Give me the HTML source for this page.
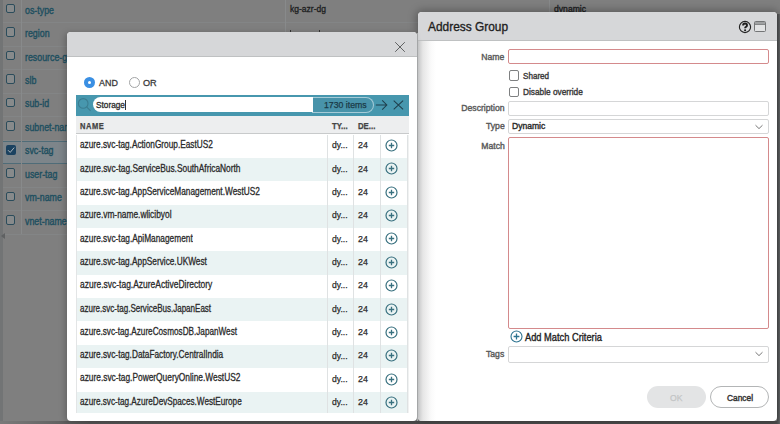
<!DOCTYPE html>
<html><head><meta charset="utf-8"><style>
html,body{margin:0;padding:0}
body{width:780px;height:424px;overflow:hidden;position:relative;background:#7f7f7f;font-family:"Liberation Sans", sans-serif}
.abs{position:absolute;box-sizing:content-box}
.t{position:absolute;white-space:nowrap;line-height:1;transform-origin:0 0;-webkit-text-stroke:0.25px currentColor}
.sq{display:inline-block;transform:scaleX(0.95);transform-origin:100% 0;-webkit-text-stroke:0.4px currentColor}
</style></head><body>
<div class="abs" style="left:3px;top:22.45px;width:777px;height:1px;background:#838586"></div><div class="abs" style="left:5.8px;top:3.90px;width:7.6px;height:7.6px;border:1.6px solid #2b4c5b;border-radius:2px;background:#878a8b"></div><div class="t " style="left:25.40px;top:5.60px;font-size:10.4px;color:#1e4f5f;font-weight:400;transform:scaleX(0.85);-webkit-text-stroke:0.4px currentColor;">os-type</div><div class="abs" style="left:3px;top:45.90px;width:777px;height:1px;background:#838586"></div><div class="abs" style="left:5.8px;top:27.35px;width:7.6px;height:7.6px;border:1.6px solid #2b4c5b;border-radius:2px;background:#878a8b"></div><div class="t " style="left:25.40px;top:29.05px;font-size:10.4px;color:#1e4f5f;font-weight:400;transform:scaleX(0.85);-webkit-text-stroke:0.4px currentColor;">region</div><div class="abs" style="left:3px;top:69.35px;width:777px;height:1px;background:#838586"></div><div class="abs" style="left:5.8px;top:50.80px;width:7.6px;height:7.6px;border:1.6px solid #2b4c5b;border-radius:2px;background:#878a8b"></div><div class="t " style="left:25.40px;top:52.50px;font-size:10.4px;color:#1e4f5f;font-weight:400;transform:scaleX(0.85);-webkit-text-stroke:0.4px currentColor;">resource-group</div><div class="abs" style="left:3px;top:92.80px;width:777px;height:1px;background:#838586"></div><div class="abs" style="left:5.8px;top:74.25px;width:7.6px;height:7.6px;border:1.6px solid #2b4c5b;border-radius:2px;background:#878a8b"></div><div class="t " style="left:25.40px;top:75.95px;font-size:10.4px;color:#1e4f5f;font-weight:400;transform:scaleX(0.85);-webkit-text-stroke:0.4px currentColor;">slb</div><div class="abs" style="left:3px;top:116.25px;width:777px;height:1px;background:#838586"></div><div class="abs" style="left:5.8px;top:97.70px;width:7.6px;height:7.6px;border:1.6px solid #2b4c5b;border-radius:2px;background:#878a8b"></div><div class="t " style="left:25.40px;top:99.40px;font-size:10.4px;color:#1e4f5f;font-weight:400;transform:scaleX(0.85);-webkit-text-stroke:0.4px currentColor;">sub-id</div><div class="abs" style="left:3px;top:139.70px;width:777px;height:1px;background:#838586"></div><div class="abs" style="left:5.8px;top:121.15px;width:7.6px;height:7.6px;border:1.6px solid #2b4c5b;border-radius:2px;background:#878a8b"></div><div class="t " style="left:25.40px;top:122.85px;font-size:10.4px;color:#1e4f5f;font-weight:400;transform:scaleX(0.85);-webkit-text-stroke:0.4px currentColor;">subnet-name</div><div class="abs" style="left:3px;top:163.15px;width:777px;height:1px;background:#838586"></div><div class="abs" style="left:1px;top:141.00px;width:779px;height:21.25px;background:#7d858a;border-top:1px solid #4f6c78;border-bottom:1px solid #4f6c78"></div><div class="abs" style="left:6px;top:144.70px;width:10px;height:10px;background:#1b4260;border-radius:2px"></div><svg class="abs" style="left:6px;top:144.70px" width="10" height="10" viewBox="0 0 10 10"><path d="M2 5.2 L4.2 7.4 L8.2 2.6" stroke="#a9b3b9" stroke-width="1" fill="none"/></svg><div class="t " style="left:25.40px;top:146.30px;font-size:10.4px;color:#1e4f5f;font-weight:400;transform:scaleX(0.85);-webkit-text-stroke:0.4px currentColor;">svc-tag</div><div class="abs" style="left:3px;top:186.60px;width:777px;height:1px;background:#838586"></div><div class="abs" style="left:5.8px;top:168.05px;width:7.6px;height:7.6px;border:1.6px solid #2b4c5b;border-radius:2px;background:#878a8b"></div><div class="t " style="left:25.40px;top:169.75px;font-size:10.4px;color:#1e4f5f;font-weight:400;transform:scaleX(0.85);-webkit-text-stroke:0.4px currentColor;">user-tag</div><div class="abs" style="left:3px;top:210.05px;width:777px;height:1px;background:#838586"></div><div class="abs" style="left:5.8px;top:191.50px;width:7.6px;height:7.6px;border:1.6px solid #2b4c5b;border-radius:2px;background:#878a8b"></div><div class="t " style="left:25.40px;top:193.20px;font-size:10.4px;color:#1e4f5f;font-weight:400;transform:scaleX(0.85);-webkit-text-stroke:0.4px currentColor;">vm-name</div><div class="abs" style="left:3px;top:233.50px;width:777px;height:1px;background:#838586"></div><div class="abs" style="left:5.8px;top:214.95px;width:7.6px;height:7.6px;border:1.6px solid #2b4c5b;border-radius:2px;background:#878a8b"></div><div class="t " style="left:25.40px;top:216.65px;font-size:10.4px;color:#1e4f5f;font-weight:400;transform:scaleX(0.85);-webkit-text-stroke:0.4px currentColor;">vnet-name</div><div class="abs" style="left:21px;top:0;width:1px;height:234px;background:#888a8b"></div><div class="abs" style="left:285px;top:0;width:1px;height:40px;background:#888a8b"></div><div class="abs" style="left:549px;top:0;width:1px;height:14px;background:#888a8b"></div><div class="t " style="left:289.80px;top:5.07px;font-size:8.9px;color:#1c1d1e;font-weight:400;transform:scaleX(0.96);-webkit-text-stroke:0.3px currentColor;">kg-azr-dg</div><div class="abs" style="left:290px;top:30px;width:1.4px;height:2px;background:#333"></div><div class="abs" style="left:319px;top:30px;width:1.4px;height:2px;background:#333"></div><div class="t " style="left:553.50px;top:5.07px;font-size:8.9px;color:#1c1d1e;font-weight:400;transform:scaleX(0.97);-webkit-text-stroke:0.3px currentColor;">dynamic</div><div class="abs" style="left:0;top:0;width:3px;height:424px;background:#727475"></div><div class="abs" style="left:1px;top:233px;width:0;height:0;border-top:3px solid transparent;border-bottom:3px solid transparent;border-right:4px solid #5f6162"></div><div class="abs" style="left:0;top:420.8px;width:780px;height:3.2px;background:linear-gradient(to right,#7a7a7a 0px,#666 50px,#535353 90px,#4e4e4e 400px)"></div><div class="abs" style="left:777px;top:14px;width:3px;height:410px;background:linear-gradient(to right,#4e5051,#5c5e5f 2px,#6a6c6d)"></div><div class="abs" style="left:418px;top:12px;width:359px;height:408.5px;background:#fff;border-radius:4px;overflow:hidden;box-shadow:0 0 9px 2px rgba(0,0,0,.28)"><div class="abs" style="left:0;top:0;width:359px;height:27.6px;background:#d6d7d9;border-bottom:1.5px solid #bfc1c2"></div><div class="abs" style="left:0;top:29px;width:18px;height:380px;background:linear-gradient(to right,#c9cacb,#e6e6e6 5px,#fafafa 13px,#fff 18px)"></div></div><div class="t " style="left:427.70px;top:19.60px;font-size:13px;color:#1e1e1e;font-weight:400;transform:scaleX(0.915);-webkit-text-stroke:0.35px currentColor;">Address Group</div><svg class="abs" style="left:738px;top:20px" width="14" height="14" viewBox="0 0 14 14"><circle cx="7" cy="7" r="5.6" stroke="#222" stroke-width="1.15" fill="none"/><path d="M5.1 5.4 Q5.1 3.5 7.1 3.5 Q9 3.5 9 5.2 Q9 6.2 7.9 6.8 Q7.1 7.2 7.1 8.3" stroke="#1e1e1e" stroke-width="1.9" fill="none"/><circle cx="7.1" cy="10.3" r="1.05" fill="#1e1e1e"/></svg><div class="abs" style="left:754px;top:21.3px;width:9.8px;height:8.4px;border:1px solid #737576;border-radius:1.5px;background:#e2e3e4"></div><div class="abs" style="left:755px;top:22.3px;width:9.8px;height:2.2px;background:#a0a2a3;border-bottom:0.8px solid #858788"></div><div class="abs" style="left:304.00px;top:52.90px;width:200px;text-align:right;font-size:9.1px;line-height:9.1px;color:#5a5a5a"><span class="sq">Name</span></div><div class="abs" style="left:508px;top:49.2px;width:259px;height:13.3px;border:1px solid #d48a8c;border-radius:2px;background:#fff"></div><div class="abs" style="left:509px;top:70.3px;width:8.3px;height:8.3px;border:1.2px solid #7e8081;border-radius:2px"></div><div class="t " style="left:522.50px;top:71.80px;font-size:9.1px;color:#3a3a3a;font-weight:400;transform:scaleX(0.89);-webkit-text-stroke:0.4px currentColor;">Shared</div><div class="abs" style="left:509px;top:86.7px;width:8.3px;height:8.3px;border:1.2px solid #7e8081;border-radius:2px"></div><div class="t " style="left:522.50px;top:87.80px;font-size:9.1px;color:#3a3a3a;font-weight:400;transform:scaleX(0.91);-webkit-text-stroke:0.4px currentColor;">Disable override</div><div class="abs" style="left:304.30px;top:104.10px;width:200px;text-align:right;font-size:9.1px;line-height:9.1px;color:#5a5a5a"><span class="sq">Description</span></div><div class="abs" style="left:508px;top:101px;width:259px;height:13px;border:1px solid #d5d6d7;border-radius:2px"></div><div class="abs" style="left:304.30px;top:122.40px;width:200px;text-align:right;font-size:9.1px;line-height:9.1px;color:#5a5a5a"><span class="sq">Type</span></div><div class="abs" style="left:508px;top:119.2px;width:259px;height:12.6px;border:1px solid #d5d6d7;border-radius:2px"></div><div class="t " style="left:511.60px;top:122.40px;font-size:9.1px;color:#2a2a2a;font-weight:400;transform:scaleX(0.94);-webkit-text-stroke:0.4px currentColor;">Dynamic</div><svg class="abs" style="left:754px;top:124px" width="10" height="6" viewBox="0 0 10 6"><path d="M1.5 1.2 L5 4.6 L8.5 1.2" stroke="#777" stroke-width="1" fill="none"/></svg><div class="abs" style="left:304.30px;top:141.50px;width:200px;text-align:right;font-size:9.1px;line-height:9.1px;color:#5a5a5a"><span class="sq">Match</span></div><div class="abs" style="left:508px;top:137px;width:259px;height:190px;border:1px solid #d48a8c;border-radius:2px"></div><svg class="abs" style="left:509.5px;top:330px" width="13" height="13" viewBox="0 0 13 13"><circle cx="6.5" cy="6.5" r="5.5" stroke="#2d7390" stroke-width="1.1" fill="none"/><path d="M6.5 3.6 V9.4 M3.6 6.5 H9.4" stroke="#2d7390" stroke-width="1.3"/></svg><div class="t " style="left:524.60px;top:332.31px;font-size:10.5px;color:#222;font-weight:400;transform:scaleX(0.885);-webkit-text-stroke:0.35px currentColor;">Add Match Criteria</div><div class="abs" style="left:304.30px;top:350.30px;width:200px;text-align:right;font-size:9.1px;line-height:9.1px;color:#5a5a5a"><span class="sq">Tags</span></div><div class="abs" style="left:508px;top:346.3px;width:259px;height:14.5px;border:1px solid #d5d6d7;border-radius:2px"></div><svg class="abs" style="left:754px;top:351px" width="10" height="6" viewBox="0 0 10 6"><path d="M1.5 1.2 L5 4.6 L8.5 1.2" stroke="#777" stroke-width="1" fill="none"/></svg><div class="abs" style="left:647px;top:386.3px;width:58.5px;height:21.6px;border-radius:11px;background:#e3e4e5"></div><div class="t " style="left:670.40px;top:392.87px;font-size:9.6px;color:#c3c5c6;font-weight:400;transform:scaleX(0.9);">OK</div><div class="abs" style="left:710.4px;top:386.3px;width:56.6px;height:19.6px;border-radius:11px;border:1px solid #b3b5b6;background:#fff"></div><div class="t " style="left:727.20px;top:392.87px;font-size:9.6px;color:#333;font-weight:400;transform:scaleX(0.87);-webkit-text-stroke:0.45px currentColor;">Cancel</div><div class="abs" style="left:67px;top:32px;width:350px;height:388.6px;background:#fff;border-radius:4px;overflow:hidden;box-shadow:-2px 1px 6px rgba(0,0,0,.22)"><div class="abs" style="left:0;top:0;width:350px;height:24.2px;background:#d6d7d9;border-bottom:1.5px solid #bfc1c2"></div></div><svg class="abs" style="left:394px;top:41px" width="12" height="12" viewBox="0 0 12 12"><path d="M1.2 1.2 L10.8 10.8 M10.8 1.2 L1.2 10.8" stroke="#606263" stroke-width="1"/></svg><div class="abs" style="left:417px;top:32.5px;width:1px;height:388px;background:#a4a6a7"></div><div class="abs" style="left:84.3px;top:76.6px;width:11px;height:11px;border-radius:50%;background:#3a8fe3"></div><div class="abs" style="left:88.3px;top:80.6px;width:3px;height:3px;border-radius:50%;background:#fff"></div><div class="t " style="left:98.80px;top:78.07px;font-size:9.6px;color:#3a3a3a;font-weight:400;transform:scaleX(0.93);-webkit-text-stroke:0.3px currentColor;">AND</div><div class="abs" style="left:128.9px;top:76.8px;width:9.6px;height:9.6px;border-radius:50%;border:0.9px solid #a2a4a5;background:#fff"></div><div class="t " style="left:143.00px;top:78.07px;font-size:9.6px;color:#3a3a3a;font-weight:400;transform:scaleX(0.95);-webkit-text-stroke:0.3px currentColor;">OR</div><div class="abs" style="left:75.5px;top:95.4px;width:333.5px;height:20.2px;background:#4797ae"></div><svg class="abs" style="left:76px;top:96px" width="16" height="16" viewBox="0 0 16 16"><circle cx="7.2" cy="7.4" r="4.8" stroke="#3b7d91" stroke-width="1.1" fill="none"/><path d="M10.6 10.9 L14.6 14.9" stroke="#3b7d91" stroke-width="1.1"/></svg><div class="abs" style="left:312px;top:97px;width:60.5px;height:13.8px;border-radius:0 8px 8px 0;background:#4893aa;border:1px solid #a6cbd7;border-left:none"></div><div class="abs" style="left:92.5px;top:97px;width:220px;height:15px;border-radius:8px 0 0 8px;background:#fff"></div><div class="t " style="left:96.30px;top:101.31px;font-size:9.2px;color:#2a2a2a;font-weight:400;transform:scaleX(0.9);-webkit-text-stroke:0.3px currentColor;">Storage</div><div class="abs" style="left:125.3px;top:99.6px;width:1px;height:10px;background:#333"></div><div class="t " style="left:323.80px;top:100.14px;font-size:9.4px;color:#1a3a47;font-weight:400;transform:scaleX(0.93);">1730 items</div><svg class="abs" style="left:375px;top:99px" width="13" height="12" viewBox="0 0 13 12"><path d="M0.8 6 H12 M7.2 1.4 L11.8 6 L7.2 10.6" stroke="#1f3f4c" stroke-width="1.05" fill="none"/></svg><svg class="abs" style="left:392.5px;top:99.5px" width="11" height="10" viewBox="0 0 11 10"><path d="M0.7 0.7 L10.1 9.3 M10.1 0.7 L0.7 9.3" stroke="#1f3f4c" stroke-width="1.05"/></svg><div class="abs" style="left:75.5px;top:115.6px;width:333.5px;height:17.8px;background:#edeeef;border-bottom:1.6px solid #c8cacb"></div><div class="t " style="left:80.00px;top:122.96px;font-size:8.2px;color:#444;font-weight:700;transform:scaleX(0.92);letter-spacing:0.6px;">NAME</div><div class="t " style="left:332.00px;top:122.96px;font-size:8.2px;color:#444;font-weight:700;transform:scaleX(0.95);">TY...</div><div class="t " style="left:358.00px;top:122.96px;font-size:8.2px;color:#444;font-weight:700;transform:scaleX(0.95);">DE...</div><div class="abs" style="left:75.5px;top:134.5px;width:331.5px;height:278.3px;overflow:hidden"><div class="abs" style="left:0;top:0.00px;width:331.5px;height:23.37px;background:#fff"></div><div class="abs" style="left:0;top:23.37px;width:331.5px;height:23.37px;background:#eaf3f3"></div><div class="abs" style="left:0;top:46.74px;width:331.5px;height:23.37px;background:#fff"></div><div class="abs" style="left:0;top:70.11px;width:331.5px;height:23.37px;background:#eaf3f3"></div><div class="abs" style="left:0;top:93.48px;width:331.5px;height:23.37px;background:#fff"></div><div class="abs" style="left:0;top:116.85px;width:331.5px;height:23.37px;background:#eaf3f3"></div><div class="abs" style="left:0;top:140.22px;width:331.5px;height:23.37px;background:#fff"></div><div class="abs" style="left:0;top:163.59px;width:331.5px;height:23.37px;background:#eaf3f3"></div><div class="abs" style="left:0;top:186.96px;width:331.5px;height:23.37px;background:#fff"></div><div class="abs" style="left:0;top:210.33px;width:331.5px;height:23.37px;background:#eaf3f3"></div><div class="abs" style="left:0;top:233.70px;width:331.5px;height:23.37px;background:#fff"></div><div class="abs" style="left:0;top:257.07px;width:331.5px;height:23.37px;background:#eaf3f3"></div></div><div class="t " style="left:80.20px;top:140.48px;font-size:10.3px;color:#2a2a2a;font-weight:400;transform:scaleX(0.8029);-webkit-text-stroke:0.3px currentColor;">azure.svc-tag.ActionGroup.EastUS2</div><div class="t " style="left:331.80px;top:140.20px;font-size:9.8px;color:#2a2a2a;font-weight:400;transform:scaleX(0.88);">dy...</div><div class="t " style="left:358.20px;top:140.16px;font-size:9.5px;color:#2a2a2a;font-weight:400;transform:scaleX(0.93);">24</div><svg class="abs" style="left:385.1px;top:139.00px" width="13" height="13" viewBox="0 0 13 13"><circle cx="6.5" cy="6.5" r="5.5" stroke="#38707f" stroke-width="1.2" fill="none"/><path d="M6.5 3.8 V9.2 M3.8 6.5 H9.2" stroke="#38707f" stroke-width="1.3"/></svg><div class="t " style="left:80.20px;top:163.78px;font-size:10.3px;color:#2a2a2a;font-weight:400;transform:scaleX(0.8105);-webkit-text-stroke:0.3px currentColor;">azure.svc-tag.ServiceBus.SouthAfricaNorth</div><div class="t " style="left:331.80px;top:163.57px;font-size:9.8px;color:#2a2a2a;font-weight:400;transform:scaleX(0.88);">dy...</div><div class="t " style="left:358.20px;top:163.53px;font-size:9.5px;color:#2a2a2a;font-weight:400;transform:scaleX(0.93);">24</div><svg class="abs" style="left:385.1px;top:162.37px" width="13" height="13" viewBox="0 0 13 13"><circle cx="6.5" cy="6.5" r="5.5" stroke="#38707f" stroke-width="1.2" fill="none"/><path d="M6.5 3.8 V9.2 M3.8 6.5 H9.2" stroke="#38707f" stroke-width="1.3"/></svg><div class="t " style="left:80.20px;top:187.08px;font-size:10.3px;color:#2a2a2a;font-weight:400;transform:scaleX(0.8041);-webkit-text-stroke:0.3px currentColor;">azure.svc-tag.AppServiceManagement.WestUS2</div><div class="t " style="left:331.80px;top:186.94px;font-size:9.8px;color:#2a2a2a;font-weight:400;transform:scaleX(0.88);">dy...</div><div class="t " style="left:358.20px;top:186.90px;font-size:9.5px;color:#2a2a2a;font-weight:400;transform:scaleX(0.93);">24</div><svg class="abs" style="left:385.1px;top:185.74px" width="13" height="13" viewBox="0 0 13 13"><circle cx="6.5" cy="6.5" r="5.5" stroke="#38707f" stroke-width="1.2" fill="none"/><path d="M6.5 3.8 V9.2 M3.8 6.5 H9.2" stroke="#38707f" stroke-width="1.3"/></svg><div class="t " style="left:80.20px;top:210.38px;font-size:10.3px;color:#2a2a2a;font-weight:400;transform:scaleX(0.8116);-webkit-text-stroke:0.3px currentColor;">azure.vm-name.wlicibyol</div><div class="t " style="left:331.80px;top:210.31px;font-size:9.8px;color:#2a2a2a;font-weight:400;transform:scaleX(0.88);">dy...</div><div class="t " style="left:358.20px;top:210.27px;font-size:9.5px;color:#2a2a2a;font-weight:400;transform:scaleX(0.93);">24</div><svg class="abs" style="left:385.1px;top:209.11px" width="13" height="13" viewBox="0 0 13 13"><circle cx="6.5" cy="6.5" r="5.5" stroke="#38707f" stroke-width="1.2" fill="none"/><path d="M6.5 3.8 V9.2 M3.8 6.5 H9.2" stroke="#38707f" stroke-width="1.3"/></svg><div class="t " style="left:80.20px;top:233.68px;font-size:10.3px;color:#2a2a2a;font-weight:400;transform:scaleX(0.807);-webkit-text-stroke:0.3px currentColor;">azure.svc-tag.ApiManagement</div><div class="t " style="left:331.80px;top:233.68px;font-size:9.8px;color:#2a2a2a;font-weight:400;transform:scaleX(0.88);">dy...</div><div class="t " style="left:358.20px;top:233.64px;font-size:9.5px;color:#2a2a2a;font-weight:400;transform:scaleX(0.93);">24</div><svg class="abs" style="left:385.1px;top:232.48px" width="13" height="13" viewBox="0 0 13 13"><circle cx="6.5" cy="6.5" r="5.5" stroke="#38707f" stroke-width="1.2" fill="none"/><path d="M6.5 3.8 V9.2 M3.8 6.5 H9.2" stroke="#38707f" stroke-width="1.3"/></svg><div class="t " style="left:80.20px;top:256.98px;font-size:10.3px;color:#2a2a2a;font-weight:400;transform:scaleX(0.8044);-webkit-text-stroke:0.3px currentColor;">azure.svc-tag.AppService.UKWest</div><div class="t " style="left:331.80px;top:257.05px;font-size:9.8px;color:#2a2a2a;font-weight:400;transform:scaleX(0.88);">dy...</div><div class="t " style="left:358.20px;top:257.01px;font-size:9.5px;color:#2a2a2a;font-weight:400;transform:scaleX(0.93);">24</div><svg class="abs" style="left:385.1px;top:255.85px" width="13" height="13" viewBox="0 0 13 13"><circle cx="6.5" cy="6.5" r="5.5" stroke="#38707f" stroke-width="1.2" fill="none"/><path d="M6.5 3.8 V9.2 M3.8 6.5 H9.2" stroke="#38707f" stroke-width="1.3"/></svg><div class="t " style="left:80.20px;top:280.28px;font-size:10.3px;color:#2a2a2a;font-weight:400;transform:scaleX(0.8227);-webkit-text-stroke:0.3px currentColor;">azure.svc-tag.AzureActiveDirectory</div><div class="t " style="left:331.80px;top:280.42px;font-size:9.8px;color:#2a2a2a;font-weight:400;transform:scaleX(0.88);">dy...</div><div class="t " style="left:358.20px;top:280.38px;font-size:9.5px;color:#2a2a2a;font-weight:400;transform:scaleX(0.93);">24</div><svg class="abs" style="left:385.1px;top:279.22px" width="13" height="13" viewBox="0 0 13 13"><circle cx="6.5" cy="6.5" r="5.5" stroke="#38707f" stroke-width="1.2" fill="none"/><path d="M6.5 3.8 V9.2 M3.8 6.5 H9.2" stroke="#38707f" stroke-width="1.3"/></svg><div class="t " style="left:80.20px;top:303.58px;font-size:10.3px;color:#2a2a2a;font-weight:400;transform:scaleX(0.7791);-webkit-text-stroke:0.3px currentColor;">azure.svc-tag.ServiceBus.JapanEast</div><div class="t " style="left:331.80px;top:303.79px;font-size:9.8px;color:#2a2a2a;font-weight:400;transform:scaleX(0.88);">dy...</div><div class="t " style="left:358.20px;top:303.75px;font-size:9.5px;color:#2a2a2a;font-weight:400;transform:scaleX(0.93);">24</div><svg class="abs" style="left:385.1px;top:302.59px" width="13" height="13" viewBox="0 0 13 13"><circle cx="6.5" cy="6.5" r="5.5" stroke="#38707f" stroke-width="1.2" fill="none"/><path d="M6.5 3.8 V9.2 M3.8 6.5 H9.2" stroke="#38707f" stroke-width="1.3"/></svg><div class="t " style="left:80.20px;top:326.88px;font-size:10.3px;color:#2a2a2a;font-weight:400;transform:scaleX(0.7936);-webkit-text-stroke:0.3px currentColor;">azure.svc-tag.AzureCosmosDB.JapanWest</div><div class="t " style="left:331.80px;top:327.16px;font-size:9.8px;color:#2a2a2a;font-weight:400;transform:scaleX(0.88);">dy...</div><div class="t " style="left:358.20px;top:327.12px;font-size:9.5px;color:#2a2a2a;font-weight:400;transform:scaleX(0.93);">24</div><svg class="abs" style="left:385.1px;top:325.96px" width="13" height="13" viewBox="0 0 13 13"><circle cx="6.5" cy="6.5" r="5.5" stroke="#38707f" stroke-width="1.2" fill="none"/><path d="M6.5 3.8 V9.2 M3.8 6.5 H9.2" stroke="#38707f" stroke-width="1.3"/></svg><div class="t " style="left:80.20px;top:350.18px;font-size:10.3px;color:#2a2a2a;font-weight:400;transform:scaleX(0.8028);-webkit-text-stroke:0.3px currentColor;">azure.svc-tag.DataFactory.CentralIndia</div><div class="t " style="left:331.80px;top:350.53px;font-size:9.8px;color:#2a2a2a;font-weight:400;transform:scaleX(0.88);">dy...</div><div class="t " style="left:358.20px;top:350.49px;font-size:9.5px;color:#2a2a2a;font-weight:400;transform:scaleX(0.93);">24</div><svg class="abs" style="left:385.1px;top:349.33px" width="13" height="13" viewBox="0 0 13 13"><circle cx="6.5" cy="6.5" r="5.5" stroke="#38707f" stroke-width="1.2" fill="none"/><path d="M6.5 3.8 V9.2 M3.8 6.5 H9.2" stroke="#38707f" stroke-width="1.3"/></svg><div class="t " style="left:80.20px;top:373.48px;font-size:10.3px;color:#2a2a2a;font-weight:400;transform:scaleX(0.8108);-webkit-text-stroke:0.3px currentColor;">azure.svc-tag.PowerQueryOnline.WestUS2</div><div class="t " style="left:331.80px;top:373.90px;font-size:9.8px;color:#2a2a2a;font-weight:400;transform:scaleX(0.88);">dy...</div><div class="t " style="left:358.20px;top:373.86px;font-size:9.5px;color:#2a2a2a;font-weight:400;transform:scaleX(0.93);">24</div><svg class="abs" style="left:385.1px;top:372.70px" width="13" height="13" viewBox="0 0 13 13"><circle cx="6.5" cy="6.5" r="5.5" stroke="#38707f" stroke-width="1.2" fill="none"/><path d="M6.5 3.8 V9.2 M3.8 6.5 H9.2" stroke="#38707f" stroke-width="1.3"/></svg><div class="t " style="left:80.20px;top:396.78px;font-size:10.3px;color:#2a2a2a;font-weight:400;transform:scaleX(0.7944);-webkit-text-stroke:0.3px currentColor;">azure.svc-tag.AzureDevSpaces.WestEurope</div><div class="t " style="left:331.80px;top:397.27px;font-size:9.8px;color:#2a2a2a;font-weight:400;transform:scaleX(0.88);">dy...</div><div class="t " style="left:358.20px;top:397.23px;font-size:9.5px;color:#2a2a2a;font-weight:400;transform:scaleX(0.93);">24</div><svg class="abs" style="left:385.1px;top:396.07px" width="13" height="13" viewBox="0 0 13 13"><circle cx="6.5" cy="6.5" r="5.5" stroke="#38707f" stroke-width="1.2" fill="none"/><path d="M6.5 3.8 V9.2 M3.8 6.5 H9.2" stroke="#38707f" stroke-width="1.3"/></svg><div class="abs" style="left:327.4px;top:134.5px;width:1px;height:278.3px;background:#dfe2e3"></div><div class="abs" style="left:353.4px;top:134.5px;width:1px;height:278.3px;background:#dfe2e3"></div><div class="abs" style="left:380.4px;top:134.5px;width:1px;height:278.3px;background:#dfe2e3"></div><div class="abs" style="left:406.6px;top:134.5px;width:1px;height:278.3px;background:#dfe2e3"></div><div class="abs" style="left:75.5px;top:134.5px;width:1px;height:278.3px;background:#e3e5e6"></div><div class="abs" style="left:407.6px;top:134.5px;width:1.8px;height:278.3px;background:#f1f2f2"></div>
</body></html>
